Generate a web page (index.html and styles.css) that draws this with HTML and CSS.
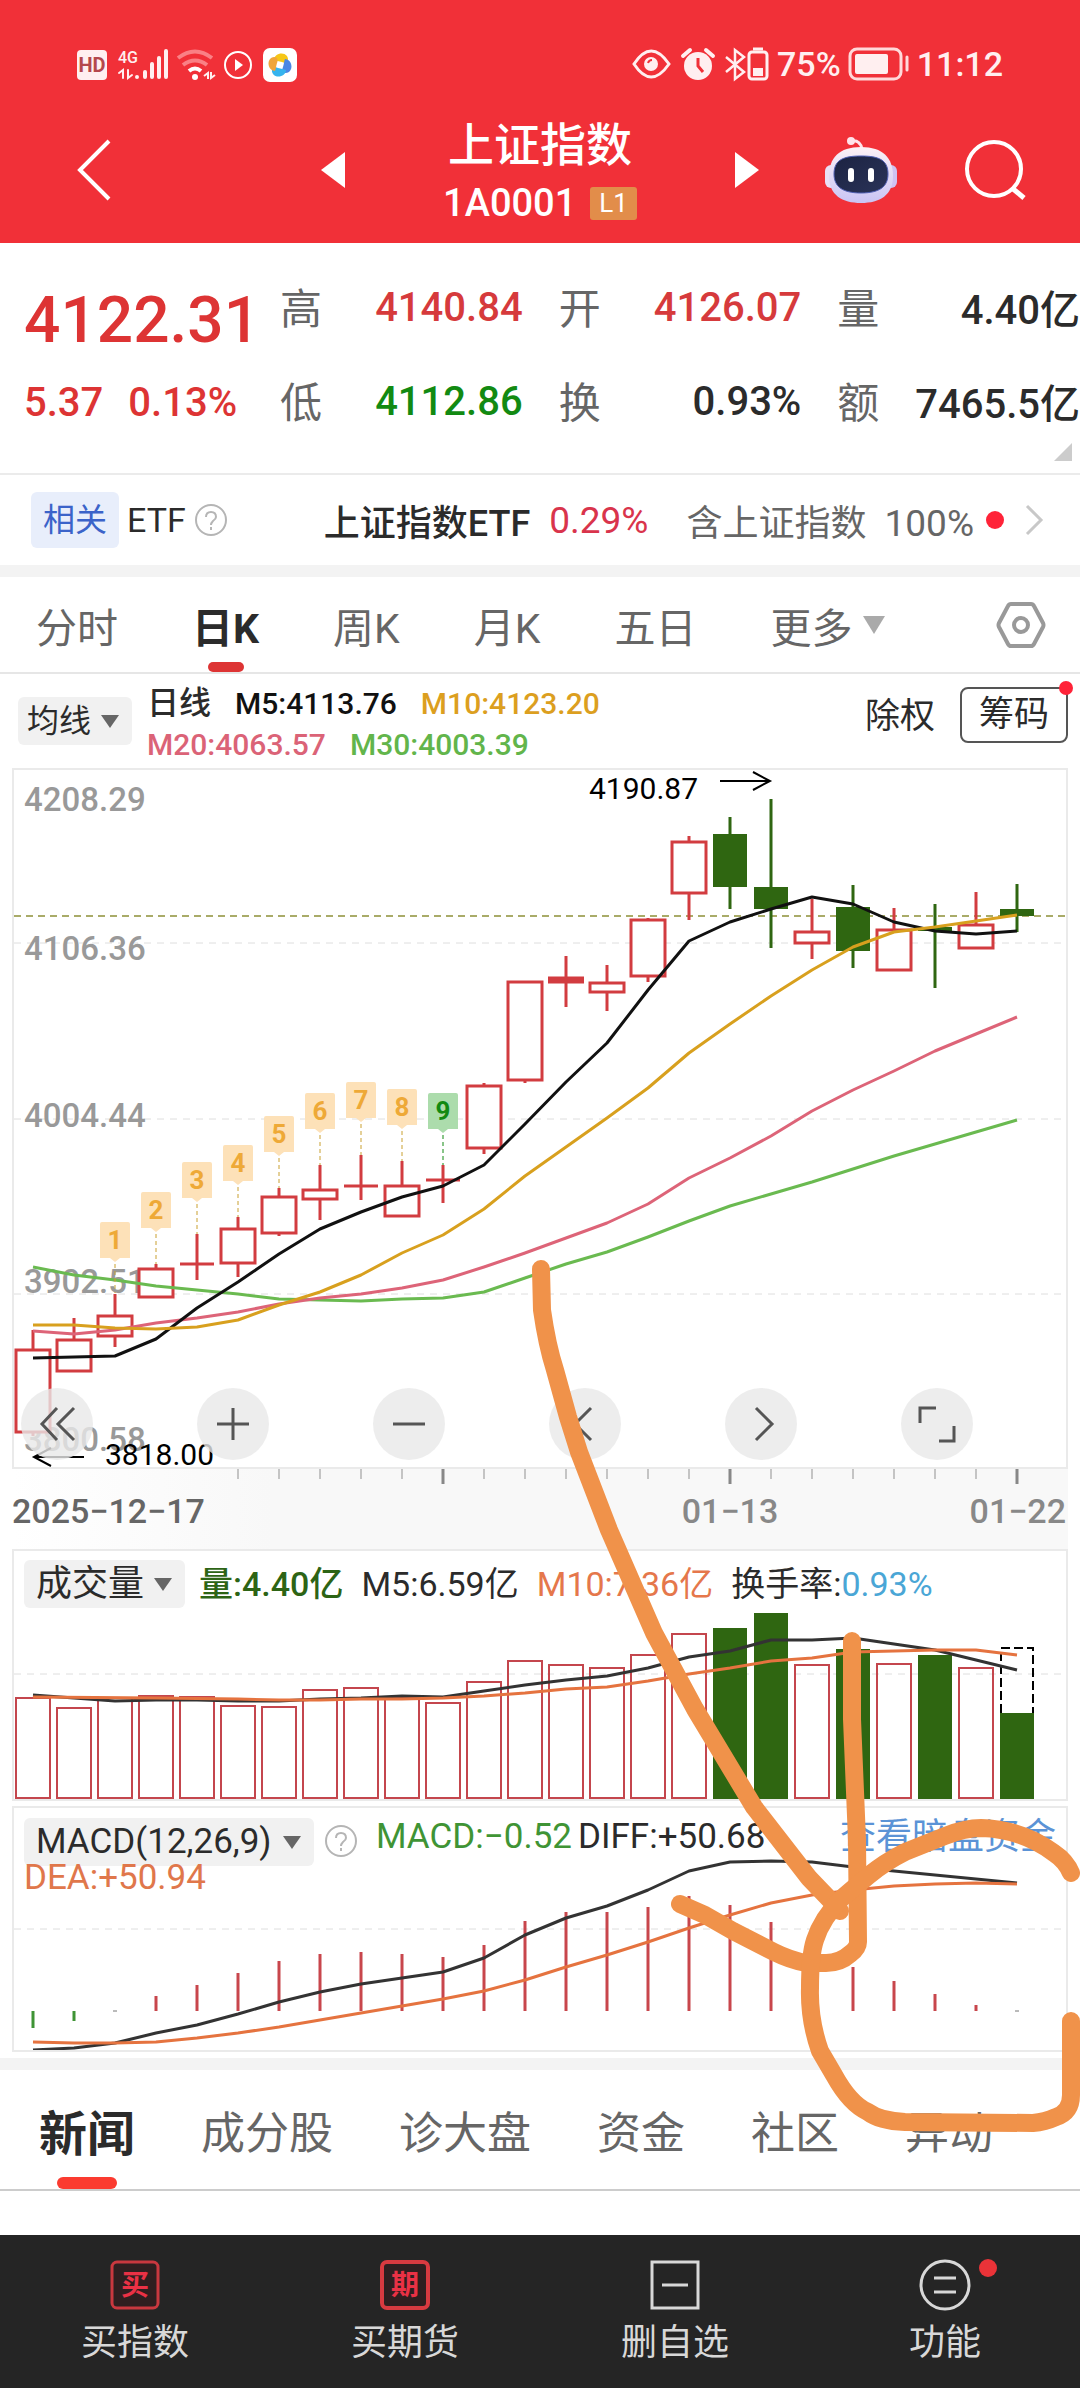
FILE: index.html
```html
<!DOCTYPE html>
<html lang="zh-CN">
<head>
<meta charset="utf-8">
<meta name="viewport" content="width=device-width, initial-scale=1">
<title>上证指数 1A0001</title>
<link rel="stylesheet" href="styles.css">
</head>
<body>
<header class="top">
  <div class="status">
    <svg class="status-left" viewBox="76 44 224 40" width="224" height="40" aria-hidden="true">
      <rect x="77" y="50" width="30" height="30" rx="4" fill="#ffeff0"/>
      <text x="92" y="72" class="hd">HD</text>
      <text x="118" y="63" class="g4">4G</text>
      <g stroke="#ffeff0" stroke-width="4" stroke-linecap="round" fill="none">
        <path d="M137 77v0M145 77v-5M152 77v-13M159 77v-19M166 77v-26"/>
        <path d="M119 73l4-3v8M128 70v8l4-3" stroke-width="2"/>
      </g>
      <g fill="none" stroke-width="4">
        <path d="M178 58q17-13 34 0" stroke="#fa8085"/>
        <path d="M183 65q12-9 24 0" stroke="#fa8085"/>
        <path d="M189 71q6-5 12 0" stroke="#fff"/>
        <path d="M204 76l4-3v6M211 72v6l4-3" stroke="#ffeff0" stroke-width="2"/>
      </g>
      <circle cx="195" cy="77" r="3" fill="#fff"/>
      <circle cx="238" cy="65" r="13" fill="none" stroke="#fff" stroke-width="2"/>
      <path d="M235 59v12l8-6z" fill="#fff"/>
      <rect x="263" y="48" width="34" height="34" rx="7" fill="#fff"/>
      <path d="M274 60c0-6 9-9 13-4 3 5-1 8-5 6-3-1-6-1-8-2z" fill="#f6c617"/>
      <path d="M285 59c6 0 9 9 4 13-5 3-8-1-6-5 1-3 1-6 2-8z" fill="#4b86e4"/>
      <path d="M286 70c0 6-9 9-13 4-3-5 1-8 5-6 3 1 6 1 8 2z" fill="#35b3ee"/>
      <path d="M275 71c-6 0-9-9-4-13 5-3 8 1 6 5-1 3-1 6-2 8z" fill="#f0a53a"/>
    </svg>
    <div class="status-right">
      <svg viewBox="634 44 138 40" width="138" height="40" aria-hidden="true">
        <g fill="none" stroke="#ffeff0" stroke-width="3">
          <path d="M636 64q17-26 35 0q-18 26-35 0z"/>
          <path d="M728 57l18 15-9 7V50l9 7-18 15" stroke-width="2.5"/>
          <rect x="751" y="52" width="18" height="27" rx="3"/>
        </g>
        <circle cx="653" cy="64" r="7" fill="#ffeff0"/>
        <path d="M650 63q1-3 4-3" stroke="#f03038" stroke-width="2" fill="none"/>
        <circle cx="700" cy="66" r="14" fill="#ffeff0"/>
        <path d="M685 56l7-6M715 56l-7-6" stroke="#ffeff0" stroke-width="4" stroke-linecap="round"/>
        <path d="M700 58v8l5 6" stroke="#f03038" stroke-width="3" fill="none"/>
        <path d="M755 49h10" stroke="#ffeff0" stroke-width="3"/>
        <path d="M755 68h10v8h-10z" fill="#ffeff0"/>
      </svg>
      <span>75%</span>
      <svg viewBox="848 48 62 34" width="62" height="34" aria-hidden="true">
        <rect x="850" y="50" width="51" height="30" rx="7" fill="none" stroke="#ffd9da" stroke-width="3"/>
        <rect x="855" y="55" width="33" height="20" rx="2" fill="#ffeff0"/>
        <path d="M907 58v13" stroke="#ffd9da" stroke-width="3" stroke-linecap="round"/>
      </svg>
      <time>11:12</time>
    </div>
  </div>
  <div class="bar">
    <button class="icon back" aria-label="返回"><svg viewBox="0 0 40 64" width="40" height="64"><path d="M35 3L6 32l29 29" fill="none" stroke="#fff" stroke-width="4"/></svg></button>
    <div class="switcher">
      <button class="icon" aria-label="上一个"><svg viewBox="0 0 24 36" width="24" height="36"><path d="M24 0v36L0 18z" fill="#fff"/></svg></button>
      <div class="name">
        <h1>上证指数</h1>
        <p>1A0001 <span class="level">L1</span></p>
      </div>
      <button class="icon" aria-label="下一个"><svg viewBox="0 0 24 36" width="24" height="36"><path d="M0 0v36l24-18z" fill="#fff"/></svg></button>
    </div>
    <div class="actions">
      <button class="icon" aria-label="智能助手">
        <svg viewBox="824 134 74 68" width="74" height="68">
          <defs>
            <linearGradient id="shell" x1="0" y1="0" x2="0" y2="1"><stop offset="0" stop-color="#fdf1f6"/><stop offset="1" stop-color="#c9c4f4"/></linearGradient>
            <linearGradient id="face" x1="0" y1="0" x2="1" y2="1"><stop offset="0" stop-color="#1c2342"/><stop offset="1" stop-color="#2a3358"/></linearGradient>
          </defs>
          <path d="M850 139q10-2 12 8" fill="none" stroke="#ffe3ea" stroke-width="3"/>
          <circle cx="851" cy="139" r="4" fill="#ffe3ea"/>
          <rect x="825" y="163" width="12" height="23" rx="6" fill="#e9dff5"/>
          <rect x="885" y="163" width="12" height="23" rx="6" fill="#cfc2f2"/>
          <path d="M861 145c22 0 32 11 32 29 0 19-13 27-32 27s-32-8-32-27c0-18 10-29 32-29z" fill="url(#shell)"/>
          <path d="M861 154c18 0 27 4 27 18 0 13-9 19-27 19s-27-6-27-19c0-14 9-18 27-18z" fill="url(#face)" stroke="#4f5fb4" stroke-width="1"/>
          <path d="M851 169v8M871 169v8" stroke="#fff" stroke-width="6" stroke-linecap="round"/>
        </svg>
      </button>
      <button class="icon" aria-label="搜索"><svg viewBox="964 138 64 64" width="64" height="64"><circle cx="994" cy="169" r="27" fill="none" stroke="#fff" stroke-width="4"/><path d="M1012 188l12 10" stroke="#fff" stroke-width="5"/></svg></button>
    </div>
  </div>
</header>

<main>
  <section class="quote">
    <div class="last">
      <strong>4122.31</strong>
      <p><span>5.37</span><span>0.13%</span></p>
    </div>
    <dl class="facts">
      <div><dt>高</dt><dd class="up">4140.84</dd></div>
      <div><dt>开</dt><dd class="up">4126.07</dd></div>
      <div><dt>量</dt><dd>4.40亿</dd></div>
      <div><dt>低</dt><dd class="down">4112.86</dd></div>
      <div><dt>换</dt><dd>0.93%</dd></div>
      <div><dt>额</dt><dd>7465.5亿</dd></div>
    </dl>
    <span class="corner"></span>
  </section>

  <a class="etf" href="#etf">
    <span class="tag">相关</span><span class="kind">ETF</span>
    <svg class="help" viewBox="0 0 34 34" width="34" height="34" aria-hidden="true"><circle cx="17" cy="17" r="15"/><path d="M12 14q0-5 5-5t5 5q0 2-3 4-2 2-2 4M17 24v3"/></svg>
    <span class="fund">上证指数ETF</span><span class="rate">0.29%</span>
    <span class="share">含上证指数 <b>100%</b></span>
    <i class="dot"></i>
    <svg viewBox="0 0 20 32" width="20" height="32" aria-hidden="true"><path d="M3 2l14 14L3 30" fill="none" stroke="#c8c8c8" stroke-width="3"/></svg>
  </a>

  <nav class="periods">
    <button>分时</button>
    <button class="on">日K</button>
    <button>周K</button>
    <button>月K</button>
    <button>五日</button>
    <button class="more">更多<i></i></button>
    <button class="icon settings" aria-label="设置"><svg viewBox="0 0 50 48" width="50" height="48"><path d="M15 3h20q2 0 3 2l9 17q1 2 0 4l-9 17q-1 2-3 2H15q-2 0-3-2L3 26q-1-2 0-4l9-17q1-2 3-2z" fill="none" stroke="#999" stroke-width="4"/><circle cx="25" cy="24" r="7" fill="none" stroke="#999" stroke-width="4"/></svg></button>
  </nav>

  <section class="averages">
    <label class="pick small"><select aria-label="主图指标"><option>均线</option></select></label>
    <div class="values">
      <p><span class="title">日线</span><span class="m5">M5:4113.76</span><span class="m10">M10:4123.20</span></p>
      <p><span class="m20">M20:4063.57</span><span class="m30">M30:4003.39</span></p>
    </div>
    <button class="adjust">除权</button>
    <button class="chips">筹码<i class="dot"></i></button>
  </section>

  <section class="panel">
    <svg class="plot" viewBox="14 770 1052 697" role="img" aria-label="日K线">
      <g class="grid"><path d="M14 943H1066M14 1119H1066M14 1294H1066"/></g>
      <path d="M14 916H1066" fill="none" stroke="#a9ab68" stroke-width="2" stroke-dasharray="7 5"/>
      <g class="scale">
        <text x="24" y="811">4208.29</text><text x="24" y="960">4106.36</text><text x="24" y="1127">4004.44</text><text x="24" y="1293">3902.51</text><text x="24" y="1451">3800.58</text>
      </g>
      <g class="red wick">
        <path d="M33 1330V1349M33 1432V1436M74 1318V1339M115 1294V1315M115 1336V1347M156 1264V1268M197 1234V1280M238 1217V1228M238 1263V1277M279 1188V1196M279 1233V1236M320 1165V1189M320 1199V1220M361 1155V1200M402 1161V1186M443 1165V1203M484 1083V1086M484 1149V1154M525 1080V1083M566 956V1007M607 965V983M607 992V1011M648 918V920M648 977V982M689 836V842M689 893V920M812 899V932M812 943V959M894 908V930M976 892V925"/>
      </g>
      <g class="red body">
        <rect x="16" y="1350" width="34" height="82"/><rect x="57" y="1340" width="34" height="31"/><rect x="98" y="1316" width="34" height="20"/><rect x="139" y="1269" width="34" height="28"/>
        <rect x="221" y="1229" width="34" height="34"/><rect x="262" y="1197" width="34" height="36"/><rect x="303" y="1190" width="34" height="9"/><rect x="385" y="1186" width="34" height="30"/>
        <rect x="467" y="1086" width="34" height="62"/><rect x="508" y="982" width="34" height="98"/><rect x="590" y="983" width="34" height="9"/><rect x="631" y="920" width="34" height="56"/>
        <rect x="672" y="842" width="34" height="51"/><rect x="795" y="932" width="34" height="11"/><rect x="877" y="930" width="34" height="40"/><rect x="959" y="925" width="34" height="23"/>
        <path d="M180 1264H214M344 1186H378M426 1180H460"/><path d="M548 980H584" stroke-width="7"/>
      </g>
      <g class="green">
        <path d="M730 817V909M771 799V948M853 885V968M935 904V988M1017 884V932" stroke-width="3"/>
        <path d="M713 834h34v53h-34zM754 887h34v22h-34zM836 907h34v44h-34zM918 927h34v4h-34zM1000 909h34v7h-34z" stroke="none"/>
      </g>
      <g class="lines">
        <polyline stroke="#6aba50" points="33,1267 74,1275 115,1280 156,1286 197,1290 238,1294 279,1299 320,1300 361,1301 402,1299 443,1298 484,1292 525,1278 566,1264 607,1252 648,1237 689,1221 730,1206 771,1194 812,1182 853,1169 894,1156 935,1144 976,1132 1017,1120"/>
        <polyline stroke="#dd6478" points="33,1331 74,1334 115,1330 156,1323 197,1318 238,1312 279,1304 320,1298 361,1294 402,1288 443,1280 484,1267 525,1253 566,1238 607,1223 648,1204 689,1178 730,1158 771,1136 812,1111 853,1090 894,1071 935,1051 976,1034 1017,1017"/>
        <polyline stroke="#111" points="33,1358 74,1357 115,1356 156,1339 197,1308 238,1282 279,1254 320,1229 361,1212 402,1197 443,1186 484,1165 525,1124 566,1082 607,1043 648,990 689,941 730,922 771,909 812,897 853,904 894,922 935,931 976,934 1017,931"/>
        <polyline stroke="#d8a01e" points="33,1325 74,1325 115,1328 156,1329 197,1327 238,1320 279,1305 320,1292 361,1275 402,1253 443,1235 484,1209 525,1176 566,1147 607,1118 648,1088 689,1053 730,1024 771,996 812,970 853,947 894,932 935,927 976,921 1017,915"/>
      </g>
      <path class="leads" d="M115 1264V1293M156 1234V1264M197 1204V1234M238 1187V1217M279 1158V1188M320 1135V1165M361 1124V1155M402 1131V1161"/>
      <path class="leads last-lead" d="M443 1135V1165"/>
      <g class="marks">
        <path d="M100 1224q0-2 2-2h26q2 0 2 2v34h-10l-5 4-5-4h-10zM141 1194q0-2 2-2h26q2 0 2 2v34h-10l-5 4-5-4h-10zM182 1164q0-2 2-2h26q2 0 2 2v34h-10l-5 4-5-4h-10zM223 1147q0-2 2-2h26q2 0 2 2v34h-10l-5 4-5-4h-10zM264 1118q0-2 2-2h26q2 0 2 2v34h-10l-5 4-5-4h-10zM305 1095q0-2 2-2h26q2 0 2 2v34h-10l-5 4-5-4h-10zM346 1084q0-2 2-2h26q2 0 2 2v34h-10l-5 4-5-4h-10zM387 1091q0-2 2-2h26q2 0 2 2v34h-10l-5 4-5-4h-10z" fill="#fde1b8"/>
        <path d="M428 1095q0-2 2-2h26q2 0 2 2v34h-10l-5 4-5-4h-10z" fill="#acdcac"/>
        <text x="115" y="1249">1</text><text x="156" y="1219">2</text><text x="197" y="1189">3</text><text x="238" y="1172">4</text><text x="279" y="1143">5</text><text x="320" y="1120">6</text><text x="361" y="1109">7</text><text x="402" y="1116">8</text><text x="443" y="1120" class="nine">9</text>
      </g>
      <g class="extremes">
        <text x="589" y="799">4190.87</text><text x="105" y="1465">3818.00</text>
        <path d="M720 781H770M753 772L770 781 753 790M84 1457H34M51 1448L34 1457 51 1466"/>
      </g>
    </svg>
    <div class="tools">
      <button aria-label="最早"><svg viewBox="0 0 40 40" width="40" height="40"><path d="M20 4L5 20l15 16M37 4L21 20l16 16"/></svg></button>
      <button aria-label="放大"><svg viewBox="0 0 40 40" width="40" height="40"><path d="M20 4v32M4 20h32"/></svg></button>
      <button aria-label="缩小"><svg viewBox="0 0 40 40" width="40" height="40"><path d="M4 20h32"/></svg></button>
      <button aria-label="左移"><svg viewBox="0 0 40 40" width="40" height="40"><path d="M26 4L10 20l16 16"/></svg></button>
      <button aria-label="右移"><svg viewBox="0 0 40 40" width="40" height="40"><path d="M15 4l16 16-16 16"/></svg></button>
      <button aria-label="全屏"><svg viewBox="0 0 40 40" width="40" height="40"><path d="M3 19V4h16M37 22v15H22"/></svg></button>
    </div>
  </section>

  <div class="dates">
    <svg class="plot" viewBox="12 1469 1056 80" role="img" aria-label="日期">
      <path d="M238 1469v10M279 1469v10M320 1469v10M361 1469v10M402 1469v10M484 1469v10M525 1469v10M566 1469v10M607 1469v10M648 1469v10M689 1469v10M771 1469v10M812 1469v10M853 1469v10M894 1469v10M935 1469v10M976 1469v10" stroke="#c4c4c4" stroke-width="2"/>
      <path d="M443 1469v15M730 1469v15M1017 1469v15" stroke="#888" stroke-width="3"/>
      <text x="12" y="1523" class="first">2025−12−17</text>
      <text x="730" y="1523" text-anchor="middle">01−13</text>
      <text x="1066" y="1523" text-anchor="end">01−22</text>
    </svg>
  </div>

  <section class="panel volume">
    <div class="legend">
      <label class="pick"><select aria-label="副图指标一"><option>成交量</option></select></label>
      <span class="vol">量:4.40亿</span><span>M5:6.59亿</span><span class="orange">M10:7.36亿</span><span class="turnover">换手率:<b>0.93%</b></span>
    </div>
    <svg class="plot" viewBox="14 1551 1052 248" role="img" aria-label="成交量">
      <g class="grid"><path d="M14 1674H1066"/></g>
      <g class="bars">
        <rect x="16" y="1698" width="34" height="100"/><rect x="57" y="1708" width="34" height="90"/><rect x="98" y="1698" width="34" height="100"/><rect x="139" y="1696" width="34" height="102"/><rect x="180" y="1697" width="34" height="101"/><rect x="221" y="1706" width="34" height="92"/><rect x="262" y="1707" width="34" height="91"/><rect x="303" y="1690" width="34" height="108"/><rect x="344" y="1688" width="34" height="110"/><rect x="385" y="1697" width="34" height="101"/><rect x="426" y="1703" width="34" height="95"/><rect x="467" y="1682" width="34" height="116"/><rect x="508" y="1661" width="34" height="137"/><rect x="549" y="1665" width="34" height="133"/><rect x="590" y="1668" width="34" height="130"/><rect x="631" y="1655" width="34" height="143"/><rect x="672" y="1634" width="34" height="164"/><rect x="795" y="1665" width="34" height="133"/><rect x="877" y="1664" width="34" height="134"/><rect x="959" y="1668" width="34" height="130"/>
      </g>
      <path class="solid" d="M713 1628h34v172h-34zM754 1613h34v187h-34zM836 1649h34v151h-34zM918 1655h34v145h-34zM1000 1713h34v87h-34z"/>
      <path d="M1001 1713V1648H1033V1713" fill="none" stroke="#000" stroke-width="2" stroke-dasharray="9 4"/>
      <g class="lines">
        <polyline stroke="#333" points="33,1695 74,1698 115,1701 156,1700 197,1700 238,1701 279,1701 320,1699 361,1698 402,1696 443,1697 484,1691 525,1685 566,1680 607,1676 648,1668 689,1657 730,1651 771,1640 812,1640 853,1638 894,1644 935,1650 976,1660 1017,1670"/>
        <polyline stroke="#e5733f" points="33,1697 156,1698 238,1699 279,1700 320,1700 361,1699 402,1699 443,1698 484,1696 525,1693 566,1689 607,1687 648,1681 689,1674 730,1668 771,1661 812,1658 853,1652 894,1651 935,1650 976,1650 1017,1655"/>
      </g>
    </svg>
  </section>

  <section class="panel macd">
    <div class="legend">
      <label class="pick"><select aria-label="副图指标二"><option>MACD(12,26,9)</option></select></label>
      <svg class="help" viewBox="0 0 34 34" width="34" height="34" aria-hidden="true"><circle cx="17" cy="17" r="15"/><path d="M12 14q0-5 5-5t5 5q0 2-3 4-2 2-2 4M17 24v3"/></svg>
      <span class="bar-value">MACD:−0.52</span><span>DIFF:+50.68</span>
      <a href="#flow">查看暗盘资金</a>
    </div>
    <p class="dea">DEA:+50.94</p>
    <svg class="plot" viewBox="14 1808 1052 242" role="img" aria-label="MACD">
      <g class="grid"><path d="M14 1929H1066"/></g>
      <path d="M33 2011V2028M74 2011V2021" stroke="#3f9435" stroke-width="3"/>
      <path d="M113 2011h4M1015 2011h4" stroke="#777" stroke-width="1"/>
      <path d="M156 2011V1996M197 2011V1985M238 2011V1973M279 2011V1961M320 2011V1954M361 2011V1952M402 2011V1954M443 2011V1957M484 2011V1945M525 2011V1921M566 2011V1912M607 2011V1912M648 2011V1907M689 2011V1896M730 2011V1905M771 2011V1922M812 2011V1943M853 2011V1967M894 2011V1981M935 2011V1994M976 2011V2005" stroke="#c8464c" stroke-width="3"/>
      <g class="lines">
        <polyline stroke="#333" points="33,2050 74,2048 115,2043 156,2033 197,2025 238,2014 279,2002 320,1992 361,1984 402,1978 443,1972 484,1958 525,1935 566,1918 607,1906 648,1890 689,1871 730,1862 771,1861 812,1862 853,1867 894,1871 935,1875 976,1879 1017,1883"/>
        <polyline stroke="#e5733f" points="33,2042 74,2043 115,2043 156,2042 197,2038 238,2033 279,2027 320,2020 361,2013 402,2006 443,1999 484,1991 525,1980 566,1967 607,1955 648,1942 689,1928 730,1915 771,1903 812,1895 853,1890 894,1886 935,1884 976,1883 1017,1884"/>
      </g>
    </svg>
  </section>

  <nav class="topics">
    <button class="on">新闻</button><button>成分股</button><button>诊大盘</button><button>资金</button><button>社区</button><button>异动</button>
  </nav>
</main>

<footer class="dock">
  <button><svg viewBox="0 0 52 52" width="52" height="52" aria-hidden="true"><rect x="3" y="3" width="46" height="46" rx="5" fill="#2f1f20" stroke="#c9383f" stroke-width="3"/><text x="26" y="36" class="glyph">买</text></svg>买指数</button>
  <button><svg viewBox="0 0 52 52" width="52" height="52" aria-hidden="true"><rect x="3" y="3" width="46" height="46" rx="5" fill="#2f1f20" stroke="#d83a40" stroke-width="4"/><text x="26" y="36" class="glyph">期</text></svg>买期货</button>
  <button><svg viewBox="0 0 52 52" width="52" height="52" aria-hidden="true"><path d="M3 3h46v46H3zM13 26h26" fill="none" stroke="#d8d8d8" stroke-width="3"/></svg>删自选</button>
  <button><span class="badge-host"><svg viewBox="0 0 52 52" width="52" height="52" aria-hidden="true"><circle cx="26" cy="26" r="24" fill="none" stroke="#d8d8d8" stroke-width="3"/><path d="M15 19h22M15 33h22" stroke="#d8d8d8" stroke-width="3"/></svg><i class="dot"></i></span>功能</button>
</footer>

<svg class="ink" viewBox="0 0 1080 2388" aria-hidden="true">
  <path d="M541 1269L542 1310Q547 1345 555 1370L568 1417 579 1452 609 1530 654 1633 695 1709 754 1807 809 1878 833 1903 840 1911"/>
  <path d="M852 1641L852 1719 857 1840 858 1942Q858 1948 850 1954 840 1963 826 1963L806 1963Q790 1960 774 1952L733 1931 705 1915 680 1904"/>
  <path d="M1071 1873Q1066 1861 1054 1853 1022 1829 981 1828 965 1828 945 1836L905 1852Q885 1862 868 1876L842 1898Q822 1918 815 1940 810 1955 810 1988 809 2020 820 2051L834 2075Q850 2104 868 2112 880 2121 905 2122L1033 2123Q1045 2122 1056 2117 1071 2112 1071 2095L1071 2021"/>
</svg>
</body>
</html>
```
FILE: styles.css
```css
* { box-sizing: border-box; }
body, h1, p, dl, dd { margin: 0; }
body {
  position: relative;
  overflow-x: hidden;
  background: #fff;
  color: #2b2b2b;
  font-family: Roboto, "Noto Sans CJK SC", sans-serif;
  font-size: 34px;
}
button, select {
  margin: 0;
  padding: 0;
  border: 0;
  background: none;
  color: inherit;
  font: inherit;
}
a { color: inherit; text-decoration: none; }
b, i { font-weight: inherit; font-style: normal; }
svg { display: block; }
.icon { flex: none; }
.dot { flex: none; width: 18px; height: 18px; border-radius: 50%; background: #ff2338; }

/* header */
.top { background: #f13038; color: #fff; }
.status { display: flex; justify-content: space-between; align-items: center; height: 97px; padding: 44px 77px 13px 76px; line-height: 40px; }
.status-right { display: flex; align-items: center; gap: 7px; color: #ffeff0; font-weight: 500; }
.hd { font: 700 20px Roboto, sans-serif; text-anchor: middle; fill: #b5474c; }
.g4 { font: 500 16px Roboto, sans-serif; fill: #ffeff0; }
.bar { display: grid; grid-template-columns: 1fr 438px 1fr; align-items: center; height: 146px; padding: 0 52px; }
.back { justify-self: start; margin-left: 22px; }
.switcher { display: flex; justify-content: space-between; align-items: center; }
.name { padding-top: 4px; text-align: center; }
.name h1 { font-size: 46px; font-weight: 500; line-height: 62px; }
.name p { display: flex; align-items: center; justify-content: center; gap: 14px; font-size: 38px; font-weight: 500; line-height: 54px; }
.level { padding: 0 9px; border-radius: 3px; background: #e28d4a; font-size: 26px; font-weight: 400; line-height: 33px; }
.actions { display: flex; justify-content: flex-end; align-items: center; gap: 66px; }

/* quote */
.quote { position: relative; display: flex; height: 232px; border-bottom: 2px solid #ebebeb; }
.last { flex: none; width: 280px; padding: 42px 0 0 24px; color: #dd3434; }
.last strong { display: block; font-size: 64px; font-weight: 500; line-height: 72px; }
.last p { display: flex; gap: 25px; margin-top: 20px; font-size: 40px; font-weight: 500; line-height: 52px; }
.facts { flex: 1; display: grid; grid-template-columns: repeat(3, 1fr); column-gap: 36px; align-content: start; padding-top: 15px; }
.facts div { display: flex; justify-content: space-between; align-items: center; height: 94px; }
.facts dt { color: #666; font-size: 42px; }
.facts dd { padding-top: 4px; font-size: 40px; font-weight: 500; white-space: nowrap; }
.facts .up { color: #d63a3c; }
.facts .down { color: #128a12; }
.corner { position: absolute; right: 8px; bottom: 12px; border-left: 18px solid transparent; border-bottom: 18px solid #ccc; }

/* related fund */
.etf { display: flex; align-items: center; height: 102px; padding: 0 36px 12px 31px; background: linear-gradient(#fff 90px, #f3f3f3 90px); font-size: 36px; white-space: nowrap; }
.tag { padding: 0 12px; border-radius: 6px; background: #e8eefb; color: #3b63c9; font-size: 32px; line-height: 56px; }
.kind { margin-left: 8px; font-size: 34px; }
.help { flex: none; margin-left: 8px; fill: none; stroke: #b5b5b5; stroke-width: 2; }
.fund { margin-left: 96px; font-weight: 500; }
.rate { margin-left: 19px; color: #d9344c; font-size: 37px; }
.share { margin: 0 12px 0 auto; color: #666; }
.share b { margin-left: 9px; font-size: 37px; }
.etf .dot { margin-right: 20px; }

/* period tabs */
.periods { display: flex; align-items: center; gap: 74px; height: 97px; padding: 0 34px 0 36px; border-bottom: 2px solid #e6e6e6; color: #666; font-size: 41px; white-space: nowrap; }
.periods button { height: 95px; }
.periods .on { position: relative; color: #2b2b2b; font-weight: 700; }
.on::after { content: ""; position: absolute; left: 50%; bottom: 0; width: 36px; height: 10px; margin-left: -18px; border-radius: 5px; background: #dd3434; }
.more { display: flex; align-items: center; gap: 10px; }
.more i { border: 11px solid transparent; border-top: 18px solid #aaa; border-bottom: 0; }
.settings { display: flex; align-items: center; margin-left: auto; }

/* moving averages */
.averages { display: flex; align-items: flex-start; height: 94px; padding: 9px 12px 0 18px; font-size: 30px; white-space: nowrap; }
.pick { position: relative; display: flex; align-items: center; flex: none; height: 48px; border-radius: 6px; background: #f1f1f1; }
.pick select { appearance: none; padding: 0 42px 0 12px; }
.pick::after { content: ""; position: absolute; right: 13px; border: 9px solid transparent; border-top: 13px solid #666; border-bottom: 0; pointer-events: none; }
.pick.small { margin-top: 14px; font-size: 32px; }
.pick.small select { padding: 0 40px 0 9px; }
.values { margin-left: 15px; font-weight: 500; }
.values p { display: flex; gap: 24px; line-height: 41px; }
.title { font-size: 32px; }
.m5 { color: #111; }
.m10 { color: #dc9f1f; }
.m20 { color: #db6377; }
.m30 { color: #62b54b; }
.adjust { margin: 9px 25px 0 auto; font-size: 35px; line-height: 50px; }
.chips { position: relative; margin-top: 4px; padding: 0 17px; border: 2px solid #555; border-radius: 8px; font-size: 35px; line-height: 52px; }
.chips .dot { position: absolute; top: -8px; right: -7px; width: 14px; height: 14px; }

/* charts */
.panel { position: relative; margin: 0 12px; border: 2px solid #eaeaea; }
.plot { width: 100%; height: auto; }
.plot text { font-family: Roboto, sans-serif; }
.grid { fill: none; stroke: #dedede; stroke-width: 1; stroke-dasharray: 7 6; }
.scale { fill: #999; font-size: 33px; font-weight: 500; }
.red { fill: none; stroke: #d23c40; stroke-width: 3; }
.red.body rect { fill: #fff; }
.green { fill: #2f6611; stroke: #2f6611; }
.lines { fill: none; stroke-width: 3; stroke-linejoin: round; }
.leads { fill: none; stroke: #c9a030; stroke-width: 1; stroke-dasharray: 4 3; }
.last-lead { stroke: #128a12; }
.marks { fill: #eea937; font-size: 26px; font-weight: 700; text-anchor: middle; }
.marks .nine { fill: #128a12; }
.extremes { fill: #000; font-size: 30px; }
.extremes path { fill: none; stroke: #000; stroke-width: 2; }
.tools { position: absolute; left: 7px; right: 7px; bottom: 7px; display: flex; gap: 104px; }
.tools button { display: flex; align-items: center; justify-content: center; width: 72px; height: 72px; border-radius: 50%; background: rgba(232, 232, 232, .8); }
.tools path { fill: none; stroke: #555; stroke-width: 3; }
.dates { margin: 0 12px; background: linear-gradient(to right, #fff, #f8f8f8 260px); }
.dates text { fill: #888; font-size: 34px; font-weight: 500; }
.dates .first { fill: #666; }
.legend { position: absolute; top: 9px; left: 10px; right: 10px; display: flex; align-items: flex-start; white-space: nowrap; }
.volume { margin-bottom: 5px; }
.volume .legend { gap: 18px; font-size: 34px; line-height: 48px; }
.volume .pick { font-size: 36px; margin-right: -4px; }
.volume select { padding-right: 40px; }
.vol { color: #2d6415; font-weight: 500; }
.orange { color: #e5774b; }
.turnover b { color: #4aa6d6; }
.bars { fill: none; stroke: #c4464d; stroke-width: 2; }
.solid { fill: #2f6611; }
.macd .legend { font-size: 35px; line-height: 40px; }
.macd .pick { margin-top: 1px; }
.macd .legend .help { margin: 7px 18px 0 10px; }
.bar-value { margin-right: 6px; color: #3f9435; }
.legend a { margin-left: auto; color: #5b93d6; font-size: 36px; }
.dea { position: absolute; top: 50px; left: 10px; color: #e0774b; font-size: 35px; line-height: 40px; }

/* topic tabs */
.topics { display: flex; gap: 66px; height: 133px; margin-top: 6px; padding: 12px 0 0 39px; border-bottom: 2px solid #ccc; background: linear-gradient(#f3f3f3 12px, #fff 12px); color: #666; font-size: 44px; white-space: nowrap; overflow: hidden; }
.topics .on { position: relative; color: #2b2b2b; font-size: 48px; font-weight: 700; }
.topics .on::after { width: 60px; height: 12px; margin-left: -30px; border-radius: 6px; background: #fb3b30; }

/* bottom bar */
.dock { display: grid; grid-template-columns: repeat(4, 1fr); height: 153px; margin-top: 44px; padding-top: 24px; background: #252525; color: #d8d8d8; font-size: 36px; }
.dock button { display: flex; flex-direction: column; align-items: center; gap: 6px; line-height: 52px; }
.glyph { font: 700 28px "Noto Sans CJK SC", sans-serif; text-anchor: middle; fill: #ea3145; }
.badge-host { position: relative; }
.badge-host .dot { position: absolute; top: 0; right: -26px; background: #ea3338; }

/* hand-drawn marker over the charts */
.ink { position: absolute; top: 0; left: 0; width: 100%; height: auto; pointer-events: none; fill: none; stroke: #f0924a; stroke-width: 18; stroke-linecap: round; stroke-linejoin: round; }
```
